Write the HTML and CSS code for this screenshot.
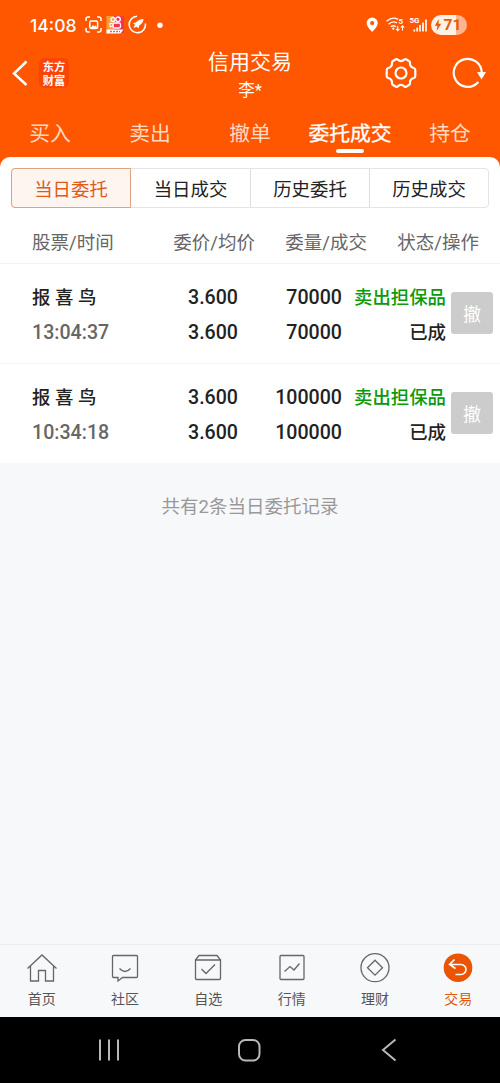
FILE: index.html
```
<!DOCTYPE html>
<html lang="zh-CN">
<head>
  <meta charset="UTF-8" />
  <meta name="viewport" content="width=device-width, initial-scale=1.0"/>
  <title>信用交易</title>
  <link rel="stylesheet" href="styles.css">
</head>
<body>

<div class="app">
  <header class="header">
    <div class="status-bar">
      <span class="clock">14:08</span>
      <svg class="status-left" width="82" height="20" viewBox="0 0 82 20" fill="none" stroke="#fff">
        <!-- screenshot -->
        <path d="M1 6V4q0-2 2-2h2M12 2h2q2 0 2 2v2M16 13v2q0 2-2 2h-2M5 17H3q-2 0-2-2v-2" stroke-width="1.5"/>
        <rect x="4.8" y="6" width="7.8" height="7.5" rx="1.5" stroke-width="1.5"/>
        <path d="M5.5 13l2.5-3 1.5 1.4 1.2-1.2 1.6 2.8z" fill="#fff" stroke="none"/>
        <!-- video app -->
        <rect x="21.500" y="1" width="9" height="17" fill="#f5a03c" stroke="none"/>
        <rect x="29" y="1" width="10" height="17" fill="#ee3654" stroke="none"/>
        <circle cx="28" cy="4.500" r="2" stroke-width="1.3"/>
        <circle cx="33" cy="4.300" r="2.300" stroke-width="1.3"/>
        <rect x="28" y="8" width="7.500" height="5" rx="1.500" stroke-width="1.3"/>
        <path d="M28 9l-3-1v4l3-1" stroke-width="1"/>
        <path d="M21.500 14.500h17l-3 4h-14z" fill="#fff" stroke="none"/>
        <path d="M25 16.500h10" stroke="#ee5a70" stroke-width="1.5" stroke-dasharray="2 1"/>
        <!-- rocket -->
        <path d="M52 1.300A8.200 8.200 0 1 0 60.500 8.500" stroke-width="1.6"/>
        <path d="M58.500 4q-5 0-7.500 3.500l-3 .5 1.800 1.800-1.300 3.200 3.200-1.300 1.800 1.800.7-3q4-2.300 4.300-6.500z" fill="#fff" stroke="none"/>
        <circle cx="75" cy="10.300" r="2.700" fill="#fff" stroke="none"/>
      </svg>
      <svg class="status-right" width="62" height="20" viewBox="0 0 62 20" fill="none" stroke="#fff">
        <path fill-rule="evenodd" d="M6.200 2.500a5.600 5.600 0 0 0-5.600 5.600c0 3.800 5.600 8.900 5.600 8.900s5.600-5.100 5.600-8.900a5.600 5.600 0 0 0-5.600-5.600zm0 3.500a2.100 2.100 0 1 1 0 4.200 2.100 2.100 0 0 1 0-4.200z" fill="#fff" stroke="none"/>
        <path d="M20.500 6.200q6-5 11.500-1.800M22.500 9.200q4.500-4 8.500-1.200M24.800 11.700q2.500-2 5 0" stroke-width="1.4"/>
        <circle cx="27.300" cy="13.700" r="1.100" fill="#fff" stroke="none"/>
        <path d="M31.700 11v4.500M30 13.800l1.700 1.900 1.700-1.900M36.500 15.500V11M34.800 12.600l1.700-1.900 1.700 1.900" stroke-width="1.100"/>
        <text class="tiny" x="32.500" y="9">5</text>
        <text class="tiny" x="43.500" y="7.500">5G</text>
        <path d="M48.300 14.500v2M51.200 12.500v4M54 10v6.500M57 7.500v9M60 4.500v12" stroke-width="1.700"/>
      </svg>
      <span class="battery">
        <svg width="8" height="12" viewBox="0 0 8 12"><path d="M4.800 0L.8 6.700h2.600L2.600 12l4.600-7.200H4.500z" fill="#e65a0c"/></svg>71
      </span>
    </div>

    <div class="title-bar">
      <svg class="back" width="16" height="26" viewBox="0 0 16 26" fill="none" stroke="#fff" stroke-width="2.500"><path d="M14.500 1.500L2 13.500l12.500 11.500"/></svg>
      <div class="logo"><span>东方</span><span>财富</span></div>
      <div class="title">
        <h1>信用交易</h1>
        <p>李*</p>
      </div>
      <svg class="gear" width="32" height="32" viewBox="0 0 32 32" fill="none" stroke="#fff" stroke-width="2.200" stroke-linejoin="round">
        <path d="M10.500 2.500Q11.500 1.700 12.700 2.700Q16 5.500 19.300 2.700Q20.500 1.700 21.500 2.500L24.300 4.200Q25.300 5 25 6.500Q25 10 28.800 11Q30.300 11.500 30.300 13V19Q30.300 20.500 28.800 21Q25 22 25 25.500Q25.300 27 24.300 27.800L21.500 29.500Q20.500 30.300 19.300 29.300Q16 26.500 12.700 29.300Q11.500 30.300 10.500 29.500L7.700 27.800Q6.700 27 7 25.500Q7 22 3.200 21Q1.700 20.500 1.700 19V13Q1.700 11.500 3.200 11Q7 10 7 6.500Q6.700 5 7.700 4.200Z"/>
        <circle cx="16" cy="16" r="5.500"/>
      </svg>
      <svg class="refresh" width="34" height="32" viewBox="0 0 34 32" fill="none" stroke="#fff" stroke-width="2.200">
        <path d="M26.300 25A14 14 0 1 1 29.700 16"/>
        <path d="M25 15h9l-4.500 7.500z" fill="#fff" stroke="none"/>
      </svg>
    </div>

    <nav class="tabs">
      <a>买入</a>
      <a>卖出</a>
      <a>撤单</a>
      <a class="active">委托成交</a>
      <a>持仓</a>
    </nav>
  </header>

  <main class="panel">
    <div class="segments">
      <a class="active">当日委托</a>
      <a>当日成交</a>
      <a>历史委托</a>
      <a>历史成交</a>
    </div>

    <div class="columns">
      <span>股票/时间</span>
      <span>委价/均价</span>
      <span>委量/成交</span>
      <span>状态/操作</span>
    </div>

    <div class="order">
      <div class="stock">报 喜 鸟<br><span class="time">13:04:37</span></div>
      <div class="num">3.600<br>3.600</div>
      <div class="num">70000<br>70000</div>
      <div class="state"><span class="sell">卖出担保品</span><br>已成</div>
      <button class="cancel" disabled>撤</button>
    </div>
    <div class="order">
      <div class="stock">报 喜 鸟<br><span class="time">10:34:18</span></div>
      <div class="num">3.600<br>3.600</div>
      <div class="num">100000<br>100000</div>
      <div class="state"><span class="sell">卖出担保品</span><br>已成</div>
      <button class="cancel" disabled>撤</button>
    </div>
  </main>

  <p class="summary">共有2条当日委托记录</p>

  <nav class="bottom-nav">
    <a>
      <svg width="32" height="32" viewBox="0 0 32 32"><path d="M1.500 15.500L16 2l14.500 13.500M4.500 13v15h8V17.500h7V28h8V13"/></svg>
      首页
    </a>
    <a>
      <svg width="32" height="32" viewBox="0 0 32 32"><path d="M4.500 2.500h23q1 0 1 1v20q0 1-1 1H13.500L9 28v-3.500H4.500q-1 0-1-1v-20q0-1 1-1z"/><path d="M10.500 15.500q5.500 6 11 0"/></svg>
      社区
    </a>
    <a>
      <svg width="32" height="32" viewBox="0 0 32 32"><path d="M3.500 7L7 2.500h18L28.500 7M3.500 7h25v18.500q0 1-1 1h-23q-1 0-1-1zM9.500 16l4.500 4.500 9-9"/></svg>
      自选
    </a>
    <a>
      <svg width="32" height="32" viewBox="0 0 32 32"><rect x="4" y="2.500" width="24" height="24" rx="1"/><path d="M8.500 18.500l5.500-5 4 3.500 5.500-6.500"/></svg>
      行情
    </a>
    <a>
      <svg width="32" height="32" viewBox="0 0 32 32"><circle cx="16" cy="14.700" r="14"/><path d="M16 7.200l7.500 7.500-7.500 7.500-7.500-7.500z"/></svg>
      理财
    </a>
    <a class="active">
      <svg width="32" height="32" viewBox="0 0 32 32"><circle cx="16" cy="14.700" r="14.300"/><path d="M12.500 6.500L7.500 11.500l6 4M7.500 11.500h11.500a5 5 0 0 1 0 10h-5.500"/></svg>
      交易
    </a>
  </nav>

  <div class="system-nav">
    <svg width="22" height="24" viewBox="0 0 22 24"><path d="M2 1.500v21M11 1.500v21M20 1.500v21"/></svg>
    <svg class="home" width="24" height="24" viewBox="0 0 24 24"><rect x="2" y="2" width="20.500" height="20.500" rx="6.500"/></svg>
    <svg width="16" height="24" viewBox="0 0 16 24"><path d="M14.500 1.500L2 12l12.500 10.500"/></svg>
  </div>
</div>

</body>
</html>
```
FILE: styles.css
```
* {
  box-sizing: border-box;
}
body {
  margin: 0;
  font-family: Roboto, "Noto Sans CJK SC", sans-serif;
  background: #f7f8fa;
  color: #222;
}
h1, p {
  margin: 0;
  font-weight: 400;
}
svg {
  display: block;
  flex: none;
}
.app {
  display: flex;
  flex-direction: column;
  height: 1083px;
}

/* header */
.header {
  height: 171px;
  background: #ff5600;
  color: #fff;
}
.status-bar {
  display: flex;
  align-items: center;
  height: 50px;
  padding: 0 33px 0 30px;
}
.clock {
  width: 55px;
  font: 500 17.6px Inter, Roboto, sans-serif;
}
.status-right {
  margin-left: auto;
  margin-right: 3px;
}
.tiny {
  font: 700 8px Roboto, sans-serif;
  fill: #fff;
  stroke: none;
}
.battery {
  display: flex;
  align-items: center;
  justify-content: center;
  gap: 2px;
  width: 36px;
  height: 20px;
  padding-right: 3px;
  border-radius: 10px;
  background: linear-gradient(90deg, #fff0e6 70%, #ffb58c 70%);
  color: #e65a0c;
  font: 700 15.5px Roboto, sans-serif;
}
.title-bar {
  display: flex;
  align-items: center;
  height: 60px;
  padding: 0 14px 0 12px;
}
.back {
  margin-top: -14px;
}
.logo {
  display: flex;
  flex-direction: column;
  width: 30px;
  height: 30px;
  margin: -14px 0 0 11px;
  padding-top: 1px;
  border-radius: 6px;
  background: #fb4508;
  font: 700 11.2px/14px "Noto Sans CJK SC", sans-serif;
  text-align: center;
}
.title {
  width: 100px;
  margin-left: 131px;
  margin-top: -9px;
  text-align: center;
}
.title h1 {
  font-size: 21px;
  line-height: 30px;
}
.title p {
  font-size: 16.5px;
  line-height: 27px;
}
.gear {
  margin: -14px 0 0 85px;
}
.refresh {
  margin: -14px 0 0 auto;
}
.tabs {
  display: grid;
  grid-template-columns: repeat(5, 1fr);
  height: 47px;
  font-size: 20.8px;
  line-height: 49px;
  text-align: center;
  color: #ffd9c2;
}
.tabs a {
  position: relative;
  height: 47px;
}
.tabs .active {
  color: #fff;
  -webkit-text-stroke: 0.3px #fff;
}
.tabs .active::after {
  content: "";
  position: absolute;
  left: 36px;
  bottom: 4px;
  width: 28px;
  height: 4px;
  border-radius: 2px;
  background: #fff;
}

/* orders */
.panel {
  margin-top: -14px;
  padding-top: 11px;
  border-radius: 10px 10px 0 0;
  background: #fff;
}
.segments {
  display: grid;
  grid-template-columns: repeat(4, 1fr);
  height: 40px;
  margin: 0 11px;
  border: 1px solid #e4e4e4;
  border-radius: 4px;
  font-size: 18.4px;
  line-height: 42px;
  text-align: center;
}
.segments a {
  height: 38px;
  border-left: 1px solid #dedede;
}
.segments .active {
  height: 40px;
  margin: -1px 0 0 -1px;
  border: 1px solid #dda37f;
  border-radius: 4px 0 0 4px;
  background: #fff5f0;
  color: #e05a17;
}
.segments .active + a {
  border-left: 0;
}
.columns {
  display: grid;
  grid-template-columns: 111px 112px 112px 112px;
  height: 55px;
  padding-left: 32px;
  font-size: 18.5px;
  line-height: 71px;
  text-align: right;
  color: #666;
}
.columns span:first-child {
  text-align: left;
}
.order {
  display: grid;
  grid-template-columns: 106px 100px 104px 104px 42px;
  height: 100px;
  padding: 16px 0 0 32px;
  border-top: 1px solid #f3f3f4;
  font-size: 18.4px;
  font-weight: 500;
  line-height: 35px;
}
.num, .state {
  text-align: right;
}
.num, .time {
  font-size: 19.6px;
}
.time {
  color: #666;
}
.sell {
  color: #0a9a0a;
}
.cancel {
  width: 42px;
  height: 42px;
  margin: 12px 0 0 5px;
  padding: 0;
  border: 0;
  border-radius: 3px;
  background: #ccc;
  color: #fff;
  font: 18px "Noto Sans CJK SC", sans-serif;
}
.summary {
  margin-top: 30px;
  font-size: 18.5px;
  line-height: 29px;
  text-align: center;
  color: #999;
}

/* bottom bars */
.bottom-nav {
  display: grid;
  grid-template-columns: repeat(6, 1fr);
  height: 73px;
  margin-top: auto;
  padding-top: 8px;
  border-top: 1px solid #ebecef;
  font-size: 14px;
  line-height: 28px;
  text-align: center;
  color: #555;
}
.bottom-nav svg {
  margin: 0 auto;
  fill: none;
  stroke: #666;
  stroke-width: 1.3;
}
.bottom-nav .active {
  color: #dd5a14;
}
.bottom-nav .active svg {
  stroke: #fff;
  stroke-width: 1.6;
}
.bottom-nav .active circle {
  fill: #ea5404;
  stroke: none;
}
.system-nav {
  display: flex;
  align-items: center;
  justify-content: space-between;
  height: 66px;
  padding: 0 103px 0 98px;
  background: #000;
}
.system-nav svg {
  fill: none;
  stroke: #b8b8b8;
  stroke-width: 2;
}
.system-nav .home {
  margin-right: 3px;
}
```
